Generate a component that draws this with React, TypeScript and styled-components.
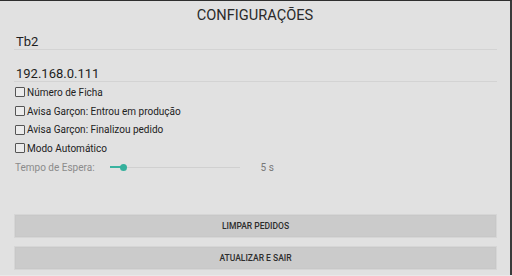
import styled, { createGlobalStyle } from "styled-components";

const Global = createGlobalStyle`
  html, body {
    margin: 0;
    padding: 0;
    background: #e9e9e9;
  }
  body {
    font-family: Roboto, "Noto Sans", sans-serif;
  }
`;

const Dialog = styled.div`
  width: 512px;
  height: 275px;
  box-sizing: border-box;
  background: #e1e1e1;
  border-top: 1px solid #2e2e2e;
  border-right: 2px solid #3a3a3a;
  display: flex;
  flex-direction: column;
  overflow: hidden;
`;

const Title = styled.div`
  height: 29px;
  line-height: 29px;
  text-align: center;
  font-size: 14.6px;
  color: #2a2a2a;
`;

const Field = styled.div`
  margin: 0 13px 0 14px;
  padding: 4px 2px 0;
  line-height: 15px;
  font-size: 13px;
  color: #1e1e1e;
  border-bottom: 1px solid #d3d3d3;

  & + & {
    margin-top: 12px;
  }
`;

const Options = styled.div`
  display: flex;
  flex-direction: column;
  padding: 1px 14px 0 15px;
`;

const Row = styled.label`
  height: 18.7px;
  display: flex;
  align-items: center;
  font-size: 10px;
  color: #222;
`;

const Box = styled.span`
  width: 8px;
  height: 8px;
  border: 1px solid #555;
  border-radius: 1px;
  background: #ececec;
  margin-right: 2px;
`;

const Label = styled.span<{ $muted?: boolean }>`
  color: ${(p) => (p.$muted ? "#8b8b8b" : "#222")};
`;

const SliderRow = styled.div`
  height: 18.7px;
  display: flex;
  align-items: center;
  font-size: 10px;
`;

const Track = styled.div`
  position: relative;
  width: 130px;
  height: 1px;
  margin-left: 15px;
  background: #d0d0d0;
`;

const Fill = styled.div`
  position: absolute;
  left: 0;
  top: -0.5px;
  height: 2px;
  background: #3ab3a0;
`;

const Thumb = styled.div`
  position: absolute;
  top: -3px;
  width: 7px;
  height: 7px;
  margin-left: -3.5px;
  border-radius: 50%;
  background: #35b09c;
`;

const Value = styled.span`
  margin-left: 21px;
  color: #777;
`;

const Buttons = styled.div`
  margin-top: auto;
  padding: 0 13px 5px 14px;
  display: flex;
  flex-direction: column;
  gap: 8px;
`;

const Button = styled.button`
  height: 24px;
  box-sizing: border-box;
  border: 1px solid #d6d6d6;
  outline: 1px solid #c8c8c8;
  outline-offset: -2px;
  background: #cbcbcb;
  font-family: Roboto, "Noto Sans", sans-serif;
  font-size: 8.5px;
  font-weight: 500;
  color: #2d2d2d;
  padding: 0;
`;

const options = [
  "Número de Ficha",
  "Avisa Garçon: Entrou em produção",
  "Avisa Garçon: Finalizou pedido",
  "Modo Automático",
];

export default function App() {
  const pct = 11;
  return (
    <>
      <Global />
      <Dialog>
        <Title>CONFIGURAÇÕES</Title>
        <Field>Tb2</Field>
        <Field>192.168.0.111</Field>
        <Options>
          {options.map((o) => (
            <Row key={o}>
              <Box />
              <Label>{o}</Label>
            </Row>
          ))}
          <SliderRow>
            <Label $muted>Tempo de Espera:</Label>
            <Track>
              <Fill style={{ width: `${pct}%` }} />
              <Thumb style={{ left: `${pct}%` }} />
            </Track>
            <Value>5 s</Value>
          </SliderRow>
        </Options>
        <Buttons>
          <Button>LIMPAR PEDIDOS</Button>
          <Button>ATUALIZAR E SAIR</Button>
        </Buttons>
      </Dialog>
    </>
  );
}
